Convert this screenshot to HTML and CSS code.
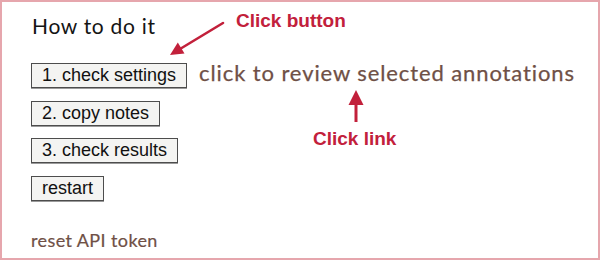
FILE: index.html
```html
<!DOCTYPE html>
<html lang="en">
<head>
<meta charset="utf-8">
<title>How to do it</title>
<link rel="stylesheet" href="styles.css">
</head>
<body>
<div class="frame">
  <h1 class="title">How to do it</h1>
  <div class="steps">
    <div class="row">
      <button class="btn">1. check settings</button>
      <a class="link" href="#">click to review selected annotations</a>
    </div>
    <div class="row"><button class="btn">2. copy notes</button></div>
    <div class="row"><button class="btn">3. check results</button></div>
    <div class="row"><button class="btn">restart</button></div>
  </div>
  <a class="reset" href="#">reset API token</a>

  <svg class="arrows" width="600" height="260" viewBox="0 0 600 260" aria-hidden="true">
    <line x1="223" y1="23" x2="180" y2="49" stroke="#c2203b" stroke-width="2.6" stroke-linecap="round"/>
    <polygon points="170,55 184.5,53.6 177.8,42.6" fill="#c2203b"/>
    <line x1="356" y1="122" x2="356" y2="102" stroke="#c2203b" stroke-width="3"/>
    <polygon points="356,90 363.5,105 348.5,105" fill="#c2203b"/>
  </svg>
  <span class="note note-button">Click button</span>
  <span class="note note-link">Click link</span>
</div>
</body>
</html>
```
FILE: styles.css
```css
html, body {
  margin: 0;
  padding: 0;
  background: #ffffff;
}

.frame {
  position: relative;
  box-sizing: border-box;
  width: 600px;
  height: 260px;
  border: 2px solid #e6a6ad;
  padding: 9.7px 0 0 29px;
  display: flex;
  flex-direction: column;
  align-items: flex-start;
}

.title {
  margin: 0 0 0 1px;
  font-family: Lato, "Open Sans", sans-serif;
  font-weight: 400;
  font-size: 21px;
  line-height: 27px;
  color: #141414;
  letter-spacing: 0.7px;
}

.steps {
  margin-top: 24.3px;
  display: flex;
  flex-direction: column;
  gap: 12.6px;
}

.row {
  display: flex;
  align-items: baseline;
  gap: 12px;
}

.btn {
  font-family: "Liberation Sans", Arial, sans-serif;
  font-size: 18px;
  line-height: 21px;
  color: #111;
  background: #f4f4f2;
  border: 1px solid #4d4d4d;
  border-radius: 0;
  padding: 1px 10px;
  margin: 0;
  box-shadow: 0 1px 0 #9a9a9a;
}

.link {
  font-family: Lato, "Open Sans", sans-serif;
  font-size: 22px;
  line-height: 20px;
  color: #6f5046;
  text-decoration: none;
  letter-spacing: 0.9px;
  -webkit-text-stroke: 0.25px #6f5046;
}

.reset {
  margin-top: 29.4px;
  font-family: Lato, "Open Sans", sans-serif;
  font-size: 18px;
  line-height: 21px;
  color: #6f5046;
  text-decoration: none;
  letter-spacing: 0.4px;
  -webkit-text-stroke: 0.2px #6f5046;
}

.arrows {
  position: absolute;
  left: -2px;
  top: -2px;
  pointer-events: none;
}

.note {
  position: absolute;
  font-family: "Liberation Sans", Arial, sans-serif;
  font-weight: 700;
  line-height: 1;
  color: #c2203b;
  white-space: nowrap;
}

.note-button {
  left: 234px;
  top: 8.5px;
  font-size: 19px;
}

.note-link {
  left: 311px;
  top: 127px;
  font-size: 19px;
}
```
